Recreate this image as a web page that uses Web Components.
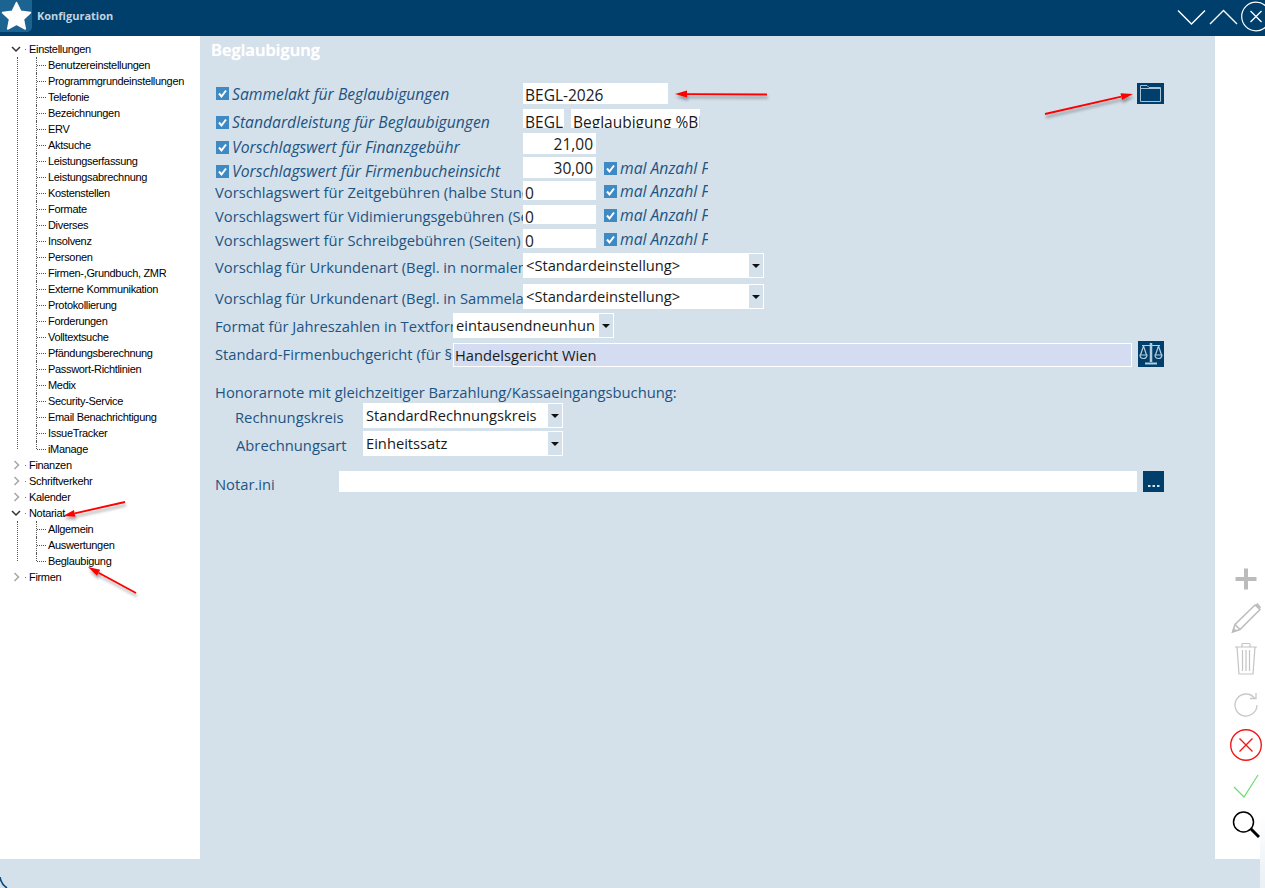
<!DOCTYPE html>
<html lang="de"><head><meta charset="utf-8"><title>Konfiguration</title>
<style>
html,body{margin:0;padding:0;height:888px;overflow:hidden;background:#d4e0ea}
</style></head><body>
<x-app>
  <x-titlebar slot="top">Konfiguration</x-titlebar>
  <x-tree slot="tree">
    <x-node open label="Einstellungen">
      <x-leaf>Benutzereinstellungen</x-leaf><x-leaf>Programmgrundeinstellungen</x-leaf><x-leaf>Telefonie</x-leaf><x-leaf>Bezeichnungen</x-leaf><x-leaf>ERV</x-leaf><x-leaf>Aktsuche</x-leaf><x-leaf>Leistungserfassung</x-leaf><x-leaf>Leistungsabrechnung</x-leaf><x-leaf>Kostenstellen</x-leaf><x-leaf>Formate</x-leaf><x-leaf>Diverses</x-leaf><x-leaf>Insolvenz</x-leaf><x-leaf>Personen</x-leaf><x-leaf>Firmen-,Grundbuch, ZMR</x-leaf><x-leaf>Externe Kommunikation</x-leaf><x-leaf>Protokollierung</x-leaf><x-leaf>Forderungen</x-leaf><x-leaf>Volltextsuche</x-leaf><x-leaf>Pfändungsberechnung</x-leaf><x-leaf>Passwort-Richtlinien</x-leaf><x-leaf>Medix</x-leaf><x-leaf>Security-Service</x-leaf><x-leaf>Email Benachrichtigung</x-leaf><x-leaf>IssueTracker</x-leaf><x-leaf>iManage</x-leaf>
    </x-node>
    <x-node label="Finanzen"></x-node>
    <x-node label="Schriftverkehr"></x-node>
    <x-node label="Kalender"></x-node>
    <x-node open label="Notariat"><x-leaf>Allgemein</x-leaf><x-leaf>Auswertungen</x-leaf><x-leaf>Beglaubigung</x-leaf></x-node>
    <x-node label="Firmen"></x-node>
  </x-tree>
  <x-form slot="main" heading="Beglaubigung">
    <x-row h="21" mt="0"><x-lab w="308" check>Sammelakt für Beglaubigungen</x-lab><x-field w="145" h="21" pt="2">BEGL-2026</x-field><x-spacer></x-spacer><x-btn kind="folder"></x-btn></x-row>
    <x-row h="19" mt="5"><x-lab w="308" pt="7" check>Standardleistung für Beglaubigungen</x-lab><x-field w="41" h="19" pt="3">BEGL</x-field><x-field w="129" h="19" ml="7" pt="3">Beglaubigung %BB</x-field></x-row>
    <x-row h="21" mt="5"><x-lab w="308" pt="7" check>Vorschlagswert für Finanzgebühr</x-lab><x-field w="73" h="21" pt="1" right>21,00</x-field></x-row>
    <x-row h="21" mt="3"><x-lab w="308" pt="7" check>Vorschlagswert für Firmenbucheinsicht</x-lab><x-field w="73" h="21" pt="1" right>30,00</x-field><x-lab w="105" ml="7" pt="1" check>mal Anzahl F</x-lab></x-row>
    <x-row h="19" mt="3"><x-lab w="308" pt="3">Vorschlagswert für Zeitgebühren (halbe Stunden)</x-lab><x-field w="73" h="19" pt="2">0</x-field><x-lab w="105" ml="7" pt="1" check>mal Anzahl F</x-lab></x-row>
    <x-row h="19" mt="5"><x-lab w="308" pt="3">Vorschlagswert für Vidimierungsgebühren (Seiten)</x-lab><x-field w="73" h="19" pt="2">0</x-field><x-lab w="105" ml="7" pt="1" check>mal Anzahl F</x-lab></x-row>
    <x-row h="19" mt="5"><x-lab w="308" pt="3">Vorschlagswert für Schreibgebühren (Seiten)</x-lab><x-field w="73" h="19" pt="2">0</x-field><x-lab w="105" ml="7" pt="1" check>mal Anzahl F</x-lab></x-row>
    <x-row h="25" mt="5"><x-lab w="308" pt="2">Vorschlag für Urkundenart (Begl. in normalem Akt)</x-lab><x-sel w="241" h="25">&lt;Standardeinstellung&gt;</x-sel></x-row>
    <x-row h="25" mt="6"><x-lab w="308" pt="2">Vorschlag für Urkundenart (Begl. in Sammelakt)</x-lab><x-sel w="241" h="25">&lt;Standardeinstellung&gt;</x-sel></x-row>
    <x-row h="25" mt="4"><x-lab w="238" pt="1">Format für Jahreszahlen in Textform</x-lab><x-sel w="161" h="25">eintausendneunhundert</x-sel></x-row>
    <x-row h="26" mt="3"><x-lab w="238">Standard-Firmenbuchgericht (für §</x-lab><x-field w="679" h="24" tint mt="2">Handelsgericht Wien</x-field><x-btn kind="scale" ml="6"></x-btn></x-row>
    <x-row h="20" mt="15"><x-lab w="700">Honorarnote mit gleichzeitiger Barzahlung/Kassaeingangsbuchung:</x-lab></x-row>
    <x-row h="25" mt="1"><x-lab w="128" ml="20" pt="3">Rechnungskreis</x-lab><x-sel w="200" h="25">StandardRechnungskreis</x-sel></x-row>
    <x-row h="25" mt="3"><x-lab w="127" ml="21" pt="3">Abrechnungsart</x-lab><x-sel w="200" h="25">Einheitssatz</x-sel></x-row>
    <x-row h="21" mt="15"><x-lab w="124" pt="5">Notar.ini</x-lab><x-field w="798" h="21"></x-field><x-btn kind="dots" ml="6"></x-btn></x-row>
  </x-form>
  <x-tools slot="tools"></x-tools>
  <x-arrows slot="over"></x-arrows>
</x-app>
<script>
const def=(n,html,init)=>customElements.define(n,class extends HTMLElement{
  constructor(){super();this.attachShadow({mode:'open'}).innerHTML=typeof html==='function'?html(this):html;}
  connectedCallback(){if(init)init(this);}
});
const LBL='#1d5482';
def('x-app',`<style>
:host{display:grid;grid-template:36px 823px 29px/200px 1015px 50px;width:1265px;height:888px;position:relative;overflow:hidden;background:#d4e0ea}
.top{grid-column:1/4}.tree{background:#fff;overflow:hidden}.main{overflow:hidden}.tools{background:#fff}
.foot{grid-column:1/4;position:relative;overflow:hidden}
.corner{position:absolute;left:0;bottom:0;display:block}
.sheet{position:absolute;left:1260px;top:813px;width:20px;height:75px;border-radius:6px 0 0 0;background:linear-gradient(#fff,#eaf0f5)}
.over{position:absolute;inset:0;pointer-events:none}
</style>
<div class="top"><slot name="top"></slot></div>
<div class="tree"><slot name="tree"></slot></div>
<div class="main"><slot name="main"></slot></div>
<div class="tools"><slot name="tools"></slot></div>
<div class="foot"><svg class="corner" width="10" height="11" viewBox="0 0 10 11"><path d="M0 0 Q1 7 7 11" fill="none" stroke="#0d4a75" stroke-width="1.600"/></svg></div>
<div class="sheet"></div>
<div class="over"><slot name="over"></slot></div>`);
def('x-titlebar',`<style>
:host{display:flex;align-items:center;height:36px;background:#003f6b;overflow:hidden;font:bold 11px "Open Sans",sans-serif;color:#c3d3e0}
.tile{width:32px;height:32px;background:#1b6391;border-radius:0 0 5px 0;margin-bottom:4px;display:flex;flex:none}
.t{margin-left:5px;margin-bottom:5px;white-space:nowrap}
.sp{flex:1}
svg{display:block;flex:none}
</style>
<div class="tile"><svg width="32" height="32" viewBox="0 0 32 32"><path d="M16.500 2.500 L20.800 11.300 L30.500 12.600 L23.500 19.300 L25.300 29 L16.500 24.400 L7.700 29 L9.500 19.300 L2.500 12.600 L12.200 11.300Z" fill="#fff" stroke="#fff" stroke-width="1.500" stroke-linejoin="round"/></svg></div>
<span class="t"><slot></slot></span><span class="sp"></span>
<svg width="32" height="36" viewBox="0 0 32 36"><path d="M1 10.500 L14.500 24 L28 10.500" fill="none" stroke="#fff" stroke-width="1.400"/></svg>
<svg width="32" height="36" viewBox="0 0 32 36"><path d="M1 24 L14.500 10.500 L28 24" fill="none" stroke="#fff" stroke-width="1.400"/></svg>
<svg width="24" height="36" viewBox="0 0 24 36" style="overflow:hidden"><circle cx="15" cy="16.500" r="14.300" fill="none" stroke="#fff" stroke-width="1.200"/><path d="M9.500 11 L20.500 22 M20.500 11 L9.500 22" stroke="#fff" stroke-width="1.300"/></svg>`);
def('x-tree',`<style>:host{display:block;padding-top:5px;font:11px "Liberation Sans",sans-serif;color:#000;letter-spacing:-.32px}</style><slot></slot>`);
def('x-node',h=>{const o=h.hasAttribute('open');return `<style>
:host{display:block;position:relative}
.r{display:flex;align-items:center;height:16px;position:relative;white-space:nowrap}
.e{width:29px;flex:none;display:block}
.c{display:block;position:relative}
.v{position:absolute;left:17px;top:0;bottom:8px;border-left:1px dotted #555}
</style>
<div class="r"><svg class="e" width="29" height="16" viewBox="0 0 29 16">${o?'<path d="M12.500 6 L16.500 10 L20.500 6" transform="translate(-0.5 0)" fill="none" stroke="#333" stroke-width="1.500"/>':'<path d="M14.500 4 L18.500 8 L14.500 12" fill="none" stroke="#a6a6a6" stroke-width="1.500"/>'}<rect x="25" y="8" width="1" height="1" fill="#777"/></svg><span>${h.getAttribute('label')}</span></div>
<div class="c">${o?'<div class="v"></div>':''}<slot></slot></div>`});
def('x-leaf',`<style>
:host{display:flex;align-items:center;height:16px;white-space:nowrap;position:relative;padding-left:48px}
.v{position:absolute;left:36px;top:0;bottom:0;border-left:1px dotted #555}
.h{position:absolute;left:37px;top:8px;width:9px;border-top:1px dotted #555}
</style><i class="v"></i><i class="h"></i><slot></slot>`,n=>{if(!n.nextElementSibling)n.shadowRoot.querySelector('.v').style.bottom='8px';});
def('x-form',h=>`<style>
:host{display:block;height:823px;padding:0 51px 0 15px;box-sizing:border-box;font:14.75px "Open Sans",sans-serif;color:${LBL}}
h1{margin:0 0 0 -4px;font:600 16.600px/28px "Open Sans",sans-serif;color:#fff;height:47px;text-shadow:0 0 1px #fff}
</style><h1>${h.getAttribute('heading')}</h1><slot></slot>`);
def('x-row',h=>`<style>:host{display:flex;align-items:flex-start;height:${h.getAttribute('h')}px;margin-top:${h.getAttribute('mt')||0}px}</style><slot></slot>`);
def('x-spacer',`<style>:host{flex:1}</style>`);
def('x-lab',h=>{const c=h.hasAttribute('check');return `<style>
:host{display:flex;align-items:center;box-sizing:border-box;height:100%;flex:none;width:${h.getAttribute('w')}px;margin-left:${h.getAttribute('ml')||0}px;padding-top:${h.getAttribute('pt')||0}px;overflow-x:clip;overflow-y:visible;white-space:nowrap;${c?'font-style:italic;font-size:15.700px;':''}}
svg{flex:none;margin:0 3px 0 1px}
</style>${c?'<svg width="13" height="13" viewBox="0 0 13 13"><rect width="13" height="13" fill="#3f8ac2"/><path d="M3 6.500 L5.500 9.500 L10 3.500" fill="none" stroke="#fff" stroke-width="2"/></svg>':''}<slot></slot>`});
def('x-field',h=>{const t=h.hasAttribute('tint');return `<style>
:host{display:block;flex:none;box-sizing:border-box;overflow:hidden;white-space:nowrap;width:${h.getAttribute('w')}px;height:${h.getAttribute('h')}px;margin-left:${h.getAttribute('ml')||0}px;margin-top:${h.getAttribute('mt')||0}px;background:${t?'#d3dcf0':'#fff'};${t?'border:1px solid #fff;':''}color:#1a1a1a;font:${t?14.7:15.5}px/20px "Open Sans",sans-serif;padding:${t?'1px 1px':(h.getAttribute('pt')||0)+'px 3px 0 2px'};text-align:${h.hasAttribute('right')?'right':'left'}}
</style><slot></slot>`});
def('x-sel',h=>`<style>
:host{display:flex;flex:none;box-sizing:border-box;width:${h.getAttribute('w')}px;height:${h.getAttribute('h')}px;border:1px solid #fff;background:#fff;color:#1a1a1a;font:14.700px/22px "Open Sans",sans-serif}
.t{flex:1;min-width:0;overflow:hidden;white-space:nowrap;padding-left:2px}
.b{width:14px;flex:none;background:#d4e0ea;position:relative;margin-left:4px}
.b:after{content:"";position:absolute;left:3px;top:10px;border:4px solid transparent;border-top-color:#111;border-bottom:0}
</style><div class="t"><slot></slot></div><div class="b"></div>`);
const ICONS={
folder:'<path d="M3.500 18.500 V2.500 H10 L12 4.500 H23.500 V18.500Z M3.500 5.500 H23.500" fill="none" stroke="#a9c3d6" stroke-width="1"/>',
scale:'<g fill="none" stroke="#b6cddd" stroke-width="1.200"><path d="M13 2 V21" stroke-width="2.500"/><path d="M7 22.500 H19" stroke-width="2"/><path d="M4 4.500 H22 M5.500 5 L2.500 14 M5.500 5 L8.500 14 M20.500 5 L17.500 14 M20.500 5 L23.500 14"/><path d="M2 14 H9 A3.500 3.500 0 0 1 2 14Z M17 14 H24 A3.500 3.500 0 0 1 17 14Z"/></g>',
dots:'<g fill="#d7e4ee"><rect x="5" y="14" width="2.500" height="2"/><rect x="9.500" y="14" width="2.500" height="2"/><rect x="14" y="14" width="2.500" height="2"/></g>'};
def('x-btn',h=>{const k=h.getAttribute('kind');const d={folder:[27,21,'0 0 27 21'],scale:[26,26,'0 0 26 26'],dots:[21,21,'0 0 21 21']}[k];
return `<style>:host{display:block;flex:none;width:${d[0]}px;height:${d[1]}px;margin-left:${h.getAttribute('ml')||0}px;background:#003f6b}svg{display:block}</style><svg width="${d[0]}" height="${d[1]}" viewBox="${d[2]}">${ICONS[k]}</svg>`});
def('x-tools',`<style>
:host{display:flex;flex-direction:column;align-items:center;height:823px;box-sizing:border-box;position:relative}
svg{display:block;flex:none;margin-left:12px}
</style>
<div style="height:530px;flex:none"></div>
<svg width="26" height="26" viewBox="0 0 26 26" style="margin-bottom:10px"><path d="M13 2.500 V23.500 M2.500 13 H23.500" stroke="#bbb" stroke-width="4"/></svg>
<svg width="32" height="32" viewBox="0 0 32 32" style="margin-bottom:8px"><g fill="none" stroke="#bdbdbd" stroke-width="1.500"><path d="M2.500 30 L5 22.500 L25 3 L30 7.500 L10 27.500Z M5 22.500 L10 27.500"/></g><path d="M2 30.500 L3.500 25.500 L7 29Z M25 3 L27.500 1 L31 5 L29.500 7.500Z" fill="#bdbdbd"/></svg>
<svg width="26" height="34" viewBox="0 0 26 34" style="margin-bottom:16px"><g fill="none" stroke="#c4c4c4" stroke-width="1.200"><path d="M2 5 H24 M9 5 V2.500 Q9 1.500 10 1.500 H16 Q17 1.500 17 2.500 V5 M4 5 L6 32 H20 L22 5 M9.500 8 V29 M13 8 V29 M16.500 8 V29"/></g></svg>
<svg width="26" height="26" viewBox="0 0 26 26" style="margin-bottom:10px"><path d="M21.500 6 A11 11 0 1 0 24 13" fill="none" stroke="#c8c8c8" stroke-width="1.300"/><path d="M17 6.500 H23 V1" fill="none" stroke="#c8c8c8" stroke-width="1.300"/></svg>
<svg width="34" height="34" viewBox="0 0 34 34" style="margin-bottom:12px"><circle cx="17" cy="17" r="15.300" fill="none" stroke="#f01818" stroke-width="1.400"/><path d="M10.500 10.500 L23.500 23.500 M23.500 10.500 L10.500 23.500" stroke="#f01818" stroke-width="1.400"/></svg>
<svg width="26" height="24" viewBox="0 0 26 24" style="margin-bottom:13px"><path d="M1 13 L11 23 L25 1" fill="none" stroke="#6ade6a" stroke-width="1.200"/></svg>
<svg width="28" height="28" viewBox="0 0 28 28"><circle cx="11.500" cy="11" r="10" fill="none" stroke="#000" stroke-width="1.500"/><path d="M19 18 L27 26" stroke="#000" stroke-width="3"/></svg>`);
const arrow=(x1,y1,x2,y2)=>{
 const a=Math.atan2(y2-y1,x2-x1),c=Math.cos(a),s=Math.sin(a),L=12,W=3.500;
 const bx=x2-c*L,by=y2-s*L;
 const head=`${x2},${y2} ${bx-s*W},${by+c*W} ${bx+s*W},${by-c*W}`;
 return `<g filter="url(#sh)"><line x1="${x1}" y1="${y1}" x2="${bx}" y2="${by}" stroke="#f00" stroke-width="1.800"/><polygon points="${head}" fill="#f00"/></g>`;};
def('x-arrows',`<style>:host{display:block;width:1265px;height:888px}svg{display:block}</style>
<svg width="1265" height="888" viewBox="0 0 1265 888"><defs><filter id="sh" x="-20%" y="-100%" width="140%" height="300%"><feDropShadow dx="1" dy="3" stdDeviation="1.500" flood-color="#000" flood-opacity=".35"/></filter></defs>
${arrow(767,94.500,675,94)}${arrow(1045,114,1133,94)}${arrow(125,502,63,516)}${arrow(136,593,88,567)}</svg>`);
</script>
</body></html>
